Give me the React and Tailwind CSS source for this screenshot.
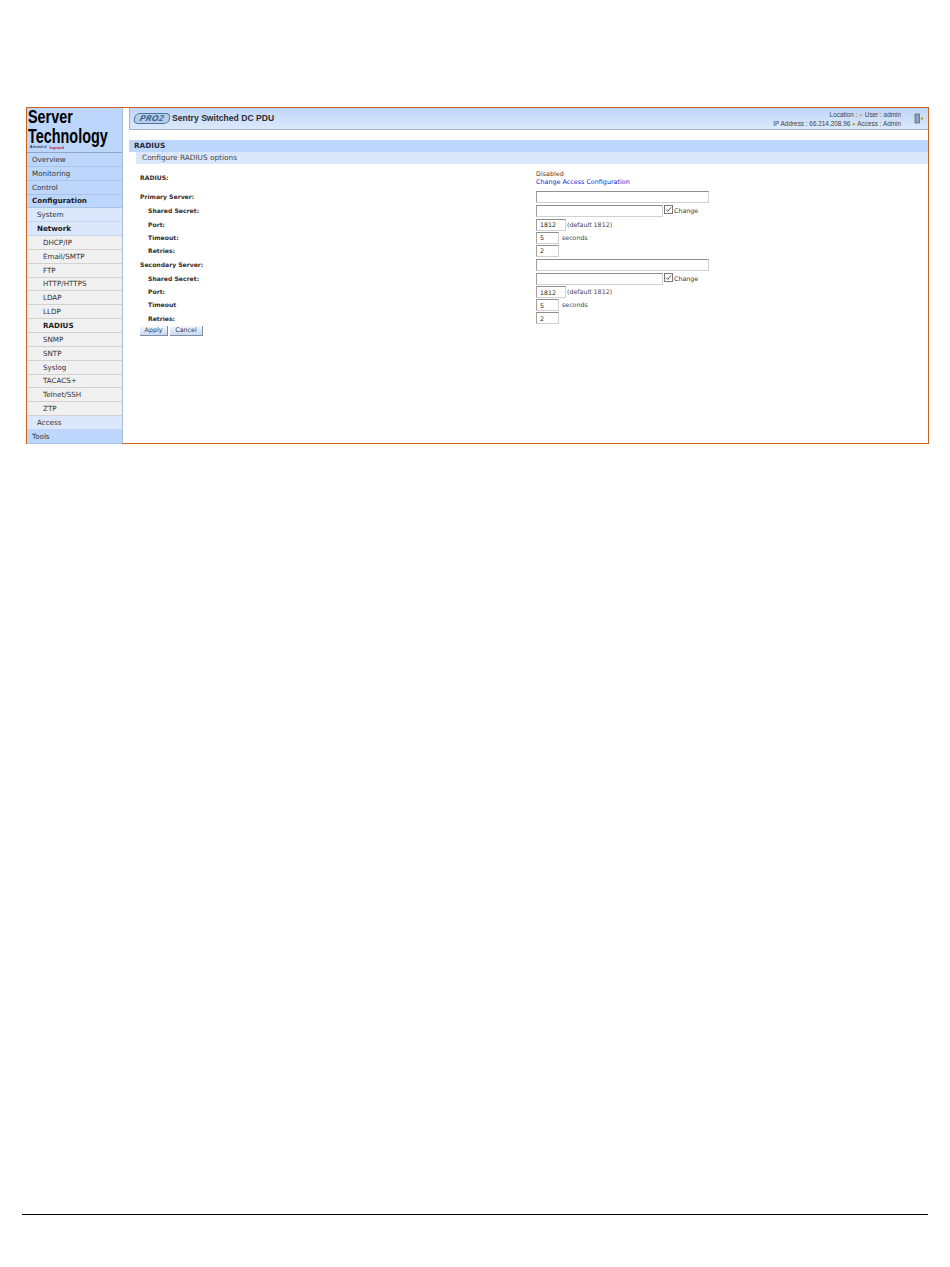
const navTop = [
  { label: "Overview", level: 0 },
  { label: "Monitoring", level: 0 },
  { label: "Control", level: 0 },
  { label: "Configuration", level: 0, bold: true },
  { label: "System", level: 1 },
  { label: "Network", level: 1, bold: true },
  { label: "DHCP/IP", level: 2 },
  { label: "Email/SMTP", level: 2 },
  { label: "FTP", level: 2 },
  { label: "HTTP/HTTPS", level: 2 },
  { label: "LDAP", level: 2 },
  { label: "LLDP", level: 2 },
  { label: "RADIUS", level: 2, bold: true },
  { label: "SNMP", level: 2 },
  { label: "SNTP", level: 2 },
  { label: "Syslog", level: 2 },
  { label: "TACACS+", level: 2 },
  { label: "Telnet/SSH", level: 2 },
  { label: "ZTP", level: 2 },
  { label: "Access", level: 1 },
  { label: "Tools", level: 0 },
];

const NavRow = ({ item }) => {
  let cls = "bg-[#bdd6fb] pl-[5px] border-[#a9c3e6]";
  if (item.level === 1) cls = "bg-[#dbe8fb] pl-[10px] border-[#c3d6ee]";
  if (item.level === 2) cls = "bg-[#f0f0f0] pl-[16px] border-[#d2d2d2]";
  return (
    <div
      className={`h-[13.85px] flex items-center border-b text-[7.15px] leading-none ${cls} ${
        item.bold ? "font-bold text-[#222]" : "text-[#333]"
      }`}
    >
      {item.label}
    </div>
  );
};

const Field = ({ w, value = "", h = "h-[12px]" }) => (
  <input
    readOnly
    value={value}
    className={`${w} ${h} bg-white border border-[#d0d0d0] border-t-[#8f8f8f] border-l-[#a0a0a0] px-[3px] text-[6.3px] text-[#222] outline-none`}
  />
);

const Row = ({ label, indent, h, children }) => (
  <div className={`flex items-center ${h}`}>
    <div
      className={`w-[396px] shrink-0 text-[6.1px] font-bold text-[#3d2b1f] ${
        indent ? "pl-[8px]" : ""
      }`}
    >
      {label}
    </div>
    <div className="flex items-center text-[6.3px] text-[#444]">{children}</div>
  </div>
);

const Check = () => (
  <span className="flex items-center ml-[1px] text-[6.3px] text-[#334]">
    <span className="w-[9px] h-[9px] border border-[#777] bg-white flex items-center justify-center mr-[1px] -mt-[3px]">
      <svg width="7" height="7" viewBox="0 0 7 7" fill="none" stroke="#444" strokeWidth="0.9">
        <path d="M1 3.5 L2.8 5.4 L6 1.4" />
      </svg>
    </span>
    Change
  </span>
);

const ServerFields = ({ title, timeoutLabel }) => (
  <>
    <Row label={title} h="h-[14px]">
      <Field w="w-[173px]" />
    </Row>
    <Row label="Shared Secret:" indent h="h-[14px]">
      <Field w="w-[127px]" />
      <Check />
    </Row>
    <Row label="Port:" indent h="h-[13px]">
      <Field w="w-[30px]" value="1812" />
      <span className="ml-[1px]">(default 1812)</span>
    </Row>
    <Row label={timeoutLabel} indent h="h-[13px]">
      <Field w="w-[23px]" value="5" />
      <span className="ml-[3px]">seconds</span>
    </Row>
    <Row label="Retries:" indent h="h-[13.5px]">
      <Field w="w-[23px]" value="2" />
    </Row>
  </>
);

const Btn = ({ w, children }) => (
  <button className={`${w} h-[10px] flex items-center justify-center text-[6.3px] leading-none text-[#334] bg-gradient-to-b from-[#f4f7fd] to-[#c9d9f2] border-r border-b border-[#7f8ca3] mr-[2px]`}>
    {children}
  </button>
);

const Logo = () => (
  <div className="h-[45px] bg-[#bdd6fb] border-b border-[#8fa6c6] pl-[1px] overflow-hidden font-['Liberation_Sans',sans-serif] font-bold text-black">
    <div className="origin-top-left scale-x-[0.8] text-[18px] leading-[15px] pt-[2px] whitespace-nowrap">Server</div>
    <div className="origin-top-left scale-x-[0.72] text-[20px] leading-[17px] mt-[3px] whitespace-nowrap">Technology</div>
    <div className="flex items-center pl-[2px] text-[3.6px] leading-none mt-[1px]">
      <span className="font-normal">A brand of</span>
      <span className="ml-[3px] text-[4px] text-[#c8102e]">legrand</span>
    </div>
  </div>
);

export default function App() {
  return (
    <div className="min-h-[1267px] bg-white pt-[107px] font-['DejaVu_Sans',sans-serif]">
      <div className="ml-[26px] w-[903px] h-[337px] border border-[#c8641e] flex">
        <div className="w-[96px] shrink-0 border-r border-[#a9bdd8]">
          <Logo />
          {navTop.map((item) => (
            <NavRow key={item.label} item={item} />
          ))}
        </div>

        <div className="flex-1 pl-[6px]">
          <div className="h-[22px] bg-gradient-to-b from-[#bfd6fb] to-[#dce9fb] border-b border-l border-[#a3b3c9] flex items-center">
            <div className="ml-[4px] w-[36px] h-[11px] rounded-[5px] -skew-x-12 border border-[#4f739c] bg-[#b8cde8] flex items-center justify-center text-[8px] font-bold italic leading-none text-[#3f6a9a]">
              PRO2
            </div>
            <div className="ml-[2px] text-[8.6px] font-['Liberation_Sans',sans-serif] font-bold text-[#2d2d2d]">
              Sentry Switched DC PDU
            </div>
            <div className="ml-auto text-right text-[6.4px] leading-[9px] text-[#444] font-['Liberation_Sans',sans-serif]">
              <div>
                Location : <span className="text-[#c9b88a]">●</span> User : admin
              </div>
              <div>
                IP Address : 66.214.208.96 <span className="text-[#d9a441]">●</span> Access : Admin
              </div>
            </div>
            <svg className="ml-[13px] mr-[4px]" width="10" height="11" viewBox="0 0 10 11">
              <path d="M1 1 H5.5 V10 H1 Z" fill="#8ea3ba" stroke="#55677a" strokeWidth="0.8" />
              <path d="M6 5.5 L9 3.5 V7.5 Z" fill="#b9a35c" />
            </svg>
          </div>

          <div className="mt-[10px] h-[12px] bg-[#bdd6fb] flex items-center pl-[5px] text-[7.3px] font-bold text-[#2a2a3a]">
            RADIUS
          </div>
          <div className="ml-[7px] h-[12px] bg-[#dbe8fb] flex items-center pl-[6px] text-[7.35px] text-[#444]">
            Configure RADIUS options
          </div>

          <div className="ml-[11px] mt-[4px]">
            <div className="flex h-[22px]">
              <div className="w-[396px] pt-[7px] text-[6.1px] leading-none font-bold text-[#3d2b1f]">RADIUS:</div>
              <div className="pt-[2px] text-[6.4px] leading-[8px]">
                <div className="text-[#5a3a2a]">Disabled</div>
                <div className="text-[#1c1cd0]">Change Access Configuration</div>
              </div>
            </div>
            <ServerFields title="Primary Server:" timeoutLabel="Timeout:" />
            <ServerFields title="Secondary Server:" timeoutLabel="Timeout" />
            <div className="flex mt-[1px]">
              <Btn w="w-[28px]">Apply</Btn>
              <Btn w="w-[33px]">Cancel</Btn>
            </div>
          </div>
        </div>
      </div>
      <div className="mt-[770px] ml-[22px] w-[906px] border-t border-black" />
    </div>
  );
}
